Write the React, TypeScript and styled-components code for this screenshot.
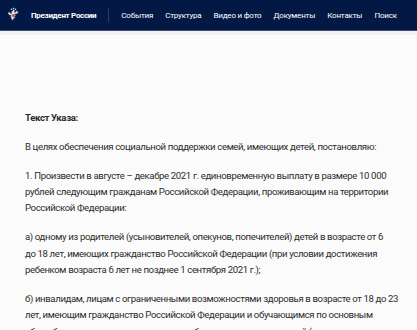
import React from 'react';
import styled, { createGlobalStyle } from 'styled-components';

const GlobalStyle = createGlobalStyle`
  html, body {
    margin: 0;
    padding: 0;
    background: #fbfbfb;
  }
  body {
    font-family: Roboto, "Liberation Sans", Arial, sans-serif;
  }
`;

const NAV = ['События', 'Структура', 'Видео и фото', 'Документы', 'Контакты', 'Поиск'];

const PARAGRAPHS = [
  'В целях обеспечения социальной поддержки семей, имеющих детей, постановляю:',
  '1. Произвести в августе – декабре 2021 г. единовременную выплату в размере 10\u00a0000 рублей следующим гражданам Российской Федерации, проживающим на территории Российской Федерации:',
  'а) одному из родителей (усыновителей, опекунов, попечителей) детей в возрасте от 6 до\u00a018 лет, имеющих гражданство Российской Федерации (при условии достижения ребенком возраста 6 лет не позднее 1 сентября 2021 г.);',
  'б) инвалидам, лицам с ограниченными возможностями здоровья в возрасте от 18 до 23 лет, имеющим гражданство Российской Федерации и обучающимся по основным общеобразовательным программам, либо одному из их родителей (законных представителей);',
];

const Header = styled.header`
  height: 30px;
  background: #031844;
  border-bottom: 1px solid #3a4a70;
  display: flex;
  align-items: center;
  padding: 0 0 0 5px;
  color: #fff;
  font-size: 8px;
  white-space: nowrap;
`;

const Brand = styled.div`
  display: flex;
  align-items: center;
  gap: 9px;
  font-weight: 700;
  letter-spacing: -0.3px;
  padding-right: 12px;
  border-right: 1px solid #2e3f66;
  height: 14px;
`;

const Menu = styled.nav`
  display: flex;
  gap: 12px;
  padding-left: 12px;
`;

const MenuItem = styled.span`
  letter-spacing: -0.2px;
`;

const Strip = styled.div`
  height: 4px;
  background: #f3f3f3;
`;

const Content = styled.main`
  padding: 75px 14px 0 25px;
  color: #2b2b2b;
  font-size: 9.6px;
  letter-spacing: -0.37px;
  line-height: 16.4px;
`;

const Para = styled.p<{ $bold?: boolean }>`
  margin: 0 0 12.4px 0;
  font-weight: ${(p) => (p.$bold ? 700 : 400)};
`;

const Emblem = () => (
  <svg width="17" height="17" viewBox="0 0 20 20">
    <g fill="#dfe3ec">
      <path d="M10 3.2c.9 0 1.4.6 1.4 1.3 0 .5-.3.8-.6 1l.8 1.3c.8-.8 1.6-1.6 1.8-2.7.4.4.5.9.3 1.4.6-.5 1.2-.6 1.8-.5-.2.5-.6.8-1.1 1 .6.1 1.1.4 1.4.9-.6.1-1.1 0-1.6-.2.4.5.6 1 .6 1.6-.5-.2-1-.5-1.3-1-.1.6-.4 1.2-.9 1.5 0-.6-.1-1-.3-1.4l-.9 1.4 1.4 1.4-1.6.3 1.2 2.2-1.8-.7.3 2.5-1.6-1.6L10 16.6l-.3-2.3-1.6 1.6.3-2.5-1.8.7 1.2-2.2-1.6-.3 1.4-1.4-.9-1.4c-.2.4-.3.8-.3 1.4-.5-.3-.8-.9-.9-1.5-.3.5-.8.8-1.3 1 0-.6.2-1.1.6-1.6-.5.2-1 .3-1.6.2.3-.5.8-.8 1.4-.9-.5-.2-.9-.5-1.1-1 .6-.1 1.2 0 1.8.5-.2-.5-.1-1 .3-1.4.2 1.1 1 1.9 1.8 2.7l.8-1.3c-.3-.2-.6-.5-.6-1 0-.7.5-1.3 1.4-1.3z" />
      <circle cx="7.6" cy="2.6" r="0.9" />
      <circle cx="12.4" cy="2.6" r="0.9" />
      <rect x="9.2" y="0.8" width="1.6" height="1.8" rx="0.4" />
    </g>
    <rect x="8.6" y="8.4" width="2.8" height="3.2" rx="0.6" fill="#b33" />
  </svg>
);

export default function App() {
  return (
    <>
      <GlobalStyle />
      <Header>
        <Brand>
          <Emblem />
          <span>Президент России</span>
        </Brand>
        <Menu>
          {NAV.map((n) => (
            <MenuItem key={n}>{n}</MenuItem>
          ))}
        </Menu>
      </Header>
      <Strip />
      <Content>
        <Para $bold>Текст Указа:</Para>
        {PARAGRAPHS.map((t) => (
          <Para key={t.slice(0, 12)}>{t}</Para>
        ))}
      </Content>
    </>
  );
}
